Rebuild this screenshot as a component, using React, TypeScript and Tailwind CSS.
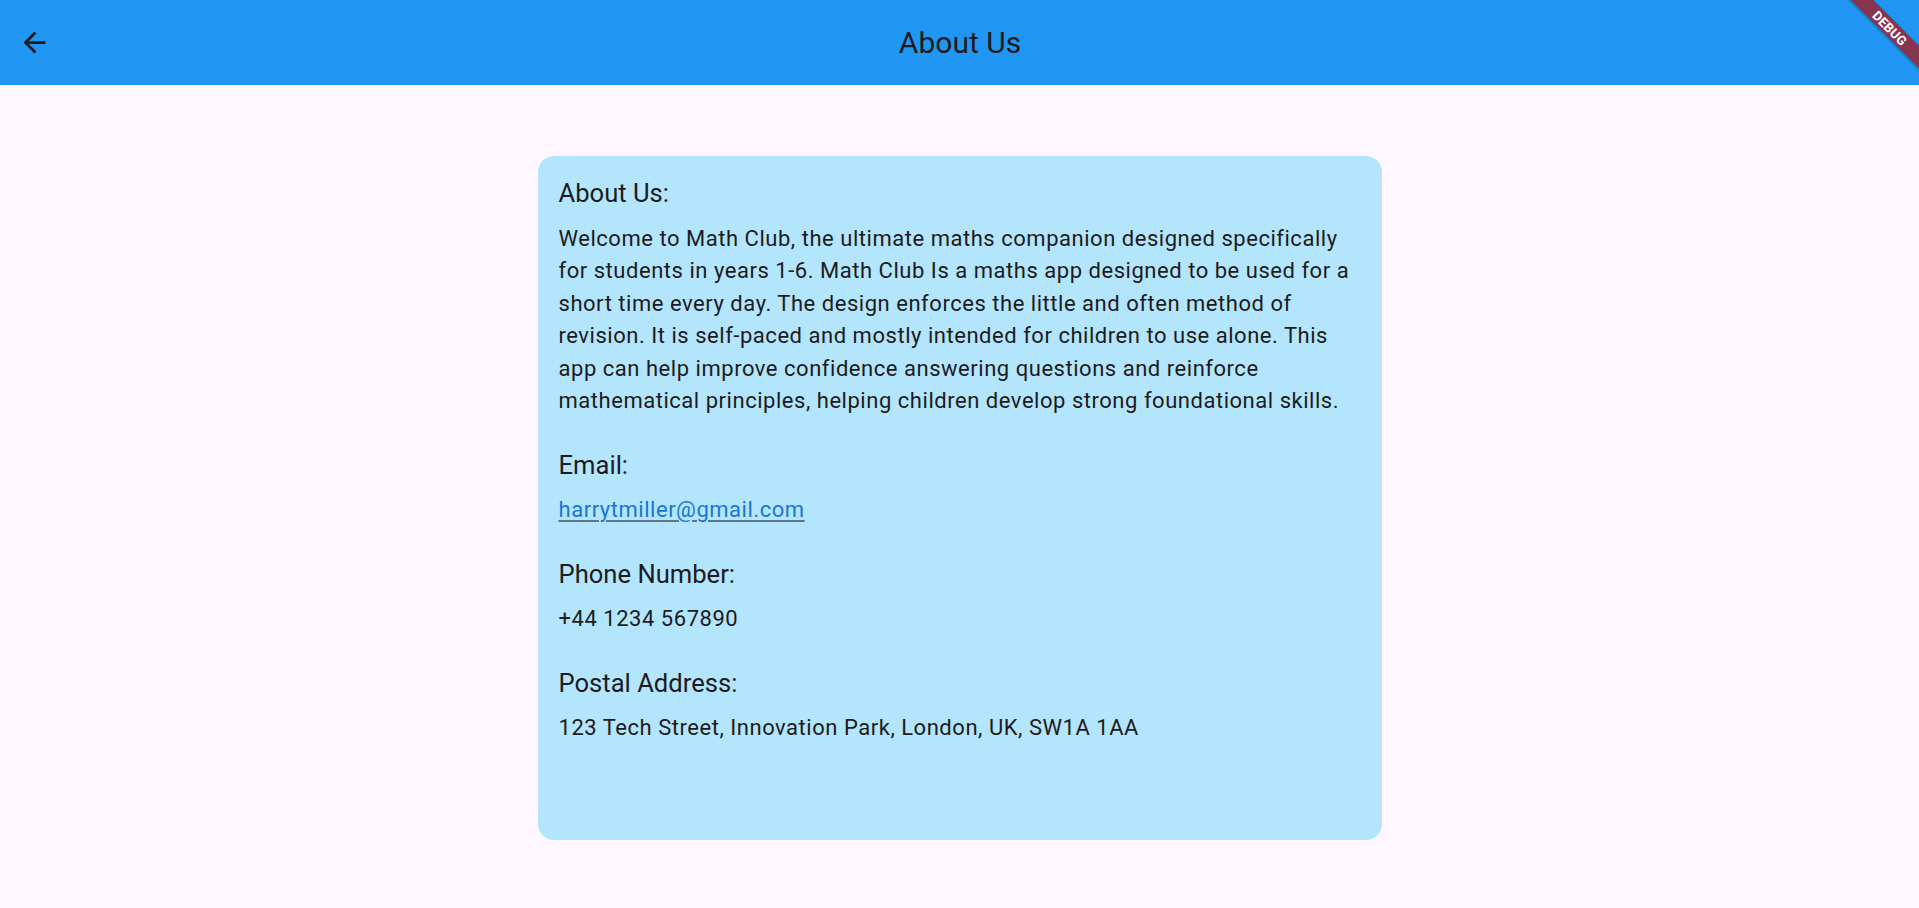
import React from 'react';

const Section: React.FC<{ title: string; children: React.ReactNode; last?: boolean }> = ({ title, children, last }) => (
  <div className={last ? '' : 'mb-[30px]'}>
    <h2 className="text-[25.6px] leading-[35px] text-[#1d1b20] mb-[11.5px]">{title}</h2>
    {children}
  </div>
);

const body = 'text-[22px] leading-[32.5px] tracking-[0.53px]';

const App: React.FC = () => {
  return (
    <div className="relative w-full min-h-screen overflow-hidden bg-[#fef7ff] font-['Roboto','Liberation_Sans',sans-serif]">
      {/* app bar */}
      <header className="relative h-[85px] bg-[#2196f3] flex items-center">
        <button className="absolute left-[18px] top-[26px] w-[33px] h-[33px] flex items-center justify-center text-[#1d1b20]">
          <svg viewBox="0 0 24 24" width="33" height="33" fill="currentColor">
            <path d="M20 11H7.83l5.59-5.59L12 4l-8 8 8 8 1.41-1.41L7.83 13H20v-2z" />
          </svg>
        </button>
        <h1 className="flex-1 text-center text-[30px] leading-none text-[#1d1b20] pl-[1px]">About Us</h1>
      </header>

      {/* debug banner */}
      <div className="absolute left-[1810px] top-[20px] w-[160px] h-[16px] rotate-45 bg-[#873550] shadow-[0_1px_3px_rgba(0,0,0,0.3)] flex items-center justify-center">
        <span className="text-white text-[13px] font-bold leading-none tracking-[0.2px]">DEBUG</span>
      </div>

      <main className="flex justify-center pt-[71px]">
        <div className="w-[844px] h-[684px] bg-[#b3e5fc] rounded-[16px] pl-[21px] pr-[20px] pt-[20px]">
          <Section title="About Us:">
            <p className={`${body} text-[#1d1b20]`}>
              Welcome to Math Club, the ultimate maths companion designed specifically for students in years 1-6. Math Club Is a maths app designed to be used for a short time every day. The design enforces the little and often method of revision. It is self-paced and mostly intended for children to use alone. This app can help improve confidence answering questions and reinforce mathematical principles, helping children develop strong foundational skills.
            </p>
          </Section>
          <Section title="Email:">
            <a href="#" className={`${body} text-[#1976d2] underline decoration-[#5f7487] decoration-2 underline-offset-[3px]`}>
              harrytmiller@gmail.com
            </a>
          </Section>
          <Section title="Phone Number:">
            <p className={`${body} text-[#1d1b20]`}>+44 1234 567890</p>
          </Section>
          <Section title="Postal Address:" last>
            <p className={`${body} text-[#1d1b20]`}>123 Tech Street, Innovation Park, London, UK, SW1A 1AA</p>
          </Section>
        </div>
      </main>
    </div>
  );
};

export default App;
